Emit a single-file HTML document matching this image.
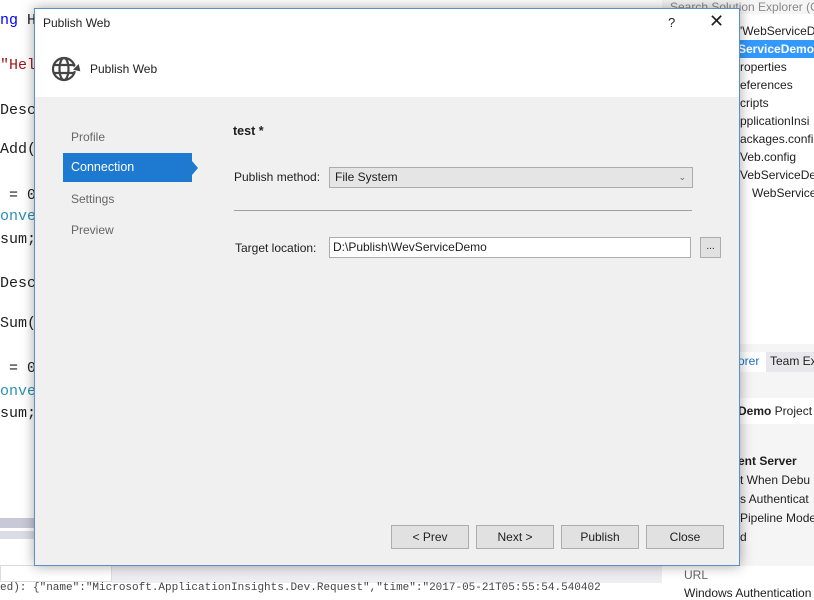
<!DOCTYPE html>
<html><head><meta charset="utf-8"><style>
*{margin:0;padding:0;box-sizing:border-box}
body{width:814px;height:596px;overflow:hidden;position:relative;background:#fff;font-family:"Liberation Sans",sans-serif;font-size:12px;color:#1e1e1e}
.abs{position:absolute;white-space:nowrap}
.code{font-family:"Liberation Mono",monospace;font-size:15px}
.se{font-size:12px}
#dlg{position:absolute;left:34px;top:8px;width:706px;height:558px;background:#f0f0f0;border:1px solid #5b8fc7;box-shadow:0 0 12px rgba(0,0,0,.35)}
.btn{position:absolute;top:516px;width:78px;height:24px;border:1px solid #adadad;background:#e1e1e1;text-align:center;line-height:22px;font-size:12px}
</style></head><body>
<!-- left code editor -->
<div class="abs code" style="left:0;top:12px;color:#0000ff">ng <span style="color:#1e1e1e">H</span></div>
<div class="abs code" style="left:0;top:57px;color:#a31515">"Hel</div>
<div class="abs code" style="left:0;top:102px">Desc</div>
<div class="abs code" style="left:0;top:141px">Add(</div>
<div class="abs code" style="left:0;top:187px">&nbsp;= 0</div>
<div class="abs code" style="left:0;top:208px;color:#2b91af">onve</div>
<div class="abs code" style="left:0;top:231px">sum;</div>
<div class="abs code" style="left:0;top:275px">Desc</div>
<div class="abs code" style="left:0;top:315px">Sum(</div>
<div class="abs code" style="left:0;top:360px">&nbsp;= 0</div>
<div class="abs code" style="left:0;top:383px;color:#2b91af">onve</div>
<div class="abs code" style="left:0;top:405px">sum;</div>
<div class="abs" style="left:0;top:518px;width:40px;height:10px;background:#c8c8d8"></div>
<div class="abs" style="left:0;top:531px;width:40px;height:8px;background:#dcdce6"></div>
<div class="abs" style="left:0;top:565px;width:112px;height:17px;background:#fff;border:1px solid #ddd"></div>
<div class="abs" style="left:112px;top:563px;width:550px;height:20px;background:#eeeef2"></div>
<div class="abs" style="left:0;top:583px;width:662px;height:13px;background:#fff;font-family:'Liberation Mono',monospace;font-size:11px;color:#444;line-height:10px">ed): {"name":"Microsoft.ApplicationInsights.Dev.Request","time":"2017-05-21T05:55:54.540402</div>
<!-- right solution explorer -->
<div class="abs" style="left:662px;top:0;width:152px;height:596px;background:#f5f5f5"></div>
<div class="abs se" style="left:670px;top:0;color:#888">Search Solution Explorer (Ct</div>
<div class="abs" style="left:738px;top:14px;width:76px;height:330px;background:#fff"></div>
<div class="abs se" style="left:740px;top:24px">'WebServiceD</div>
<div class="abs se" style="left:738px;top:40px;width:76px;height:18px;background:#3399ff;color:#fff;font-weight:bold;line-height:18px">ServiceDemo</div>
<div class="abs se" style="left:740px;top:60px">roperties</div>
<div class="abs se" style="left:740px;top:78px">eferences</div>
<div class="abs se" style="left:740px;top:96px">cripts</div>
<div class="abs se" style="left:740px;top:114px">pplicationInsi</div>
<div class="abs se" style="left:740px;top:132px">ackages.confi</div>
<div class="abs se" style="left:740px;top:150px">Veb.config</div>
<div class="abs se" style="left:740px;top:168px">VebServiceDer</div>
<div class="abs se" style="left:752px;top:186px">WebService</div>
<div class="abs se" style="left:738px;top:352px;width:28px;height:20px;background:#fff;color:#1e6fc8;line-height:18px">orer</div>
<div class="abs se" style="left:766px;top:352px;width:48px;height:20px;background:#e8e8ec;line-height:18px;padding-left:4px">Team Ex</div>
<div class="abs se" style="left:738px;top:398px;width:76px;height:26px;background:#fff;line-height:26px"><b>Demo</b> Project</div>
<div class="abs se" style="left:738px;top:454px;font-weight:bold">ent Server</div>
<div class="abs se" style="left:740px;top:473px">t When Debu</div>
<div class="abs se" style="left:740px;top:492px">s Authenticat</div>
<div class="abs se" style="left:740px;top:511px">Pipeline Mode</div>
<div class="abs se" style="left:740px;top:530px">d</div>
<div class="abs" style="left:662px;top:566px;width:152px;height:30px;background:#fff"></div>
<div class="abs se" style="left:684px;top:568px;color:#666">URL</div>
<div class="abs se" style="left:684px;top:586px">Windows Authentication</div>
<!-- dialog -->
<div id="dlg">
 <div class="abs" style="left:0;top:0;width:704px;height:88px;background:#fff"></div>
 <div class="abs" style="left:8px;top:7px;font-size:12px">Publish Web</div>
 <div class="abs" style="left:633px;top:6px;font-size:13px">?</div>
 <div class="abs" style="left:674px;top:2px;font-size:18px;font-weight:300">✕</div>
 <svg class="abs" style="left:15px;top:45px" width="32" height="30" viewBox="0 0 32 30">
  <g fill="none" stroke="#444" stroke-width="2.2">
   <circle cx="14" cy="15" r="11"/>
   <ellipse cx="14" cy="15" rx="4.5" ry="11"/>
   <line x1="3" y1="11" x2="25" y2="11"/><line x1="3" y1="19" x2="25" y2="19"/>
  </g>
  <path d="M22 16 L29 9 L31 18 Z" fill="#444" stroke="#fff" stroke-width="1"/>
 </svg>
 <div class="abs" style="left:55px;top:53px;font-size:12px">Publish Web</div>
 <div class="abs" style="left:36px;top:121px;color:#666">Profile</div>
 <div class="abs" style="left:28px;top:144px;width:129px;height:29px;background:#1e7ad0;color:#fff;line-height:29px;padding-left:8px;font-size:12.5px">Connection</div>
 <div class="abs" style="left:157px;top:152px;width:0;height:0;border-top:7px solid transparent;border-bottom:7px solid transparent;border-left:6px solid #1e7ad0"></div>
 <div class="abs" style="left:36px;top:183px;color:#666">Settings</div>
 <div class="abs" style="left:36px;top:214px;color:#666">Preview</div>
 <div class="abs" style="left:198px;top:115px;font-weight:bold;font-size:12.5px">test *</div>
 <div class="abs" style="left:199px;top:161px">Publish method:</div>
 <div class="abs" style="left:294px;top:158px;width:364px;height:21px;border:1px solid #acacac;background:#e5e5e5;line-height:19px;padding-left:5px">File System<span style="position:absolute;right:6px;top:0;font-size:9px;color:#666">⌄</span></div>
 <div class="abs" style="left:199px;top:201px;width:458px;height:1px;background:#a0a0a0"></div>
 <div class="abs" style="left:200px;top:232px">Target location:</div>
 <div class="abs" style="left:294px;top:228px;width:362px;height:21px;border:1px solid #acacac;background:#fff;line-height:19px;padding-left:3px">D:\Publish\WevServiceDemo</div>
 <div class="abs" style="left:665px;top:228px;width:21px;height:21px;border:1px solid #acacac;background:#e1e1e1;text-align:center;line-height:17px;font-size:10px">...</div>
 <div class="btn" style="left:356px">&lt; Prev</div>
 <div class="btn" style="left:441px">Next &gt;</div>
 <div class="btn" style="left:526px">Publish</div>
 <div class="btn" style="left:611px">Close</div>
</div>
</body></html>
